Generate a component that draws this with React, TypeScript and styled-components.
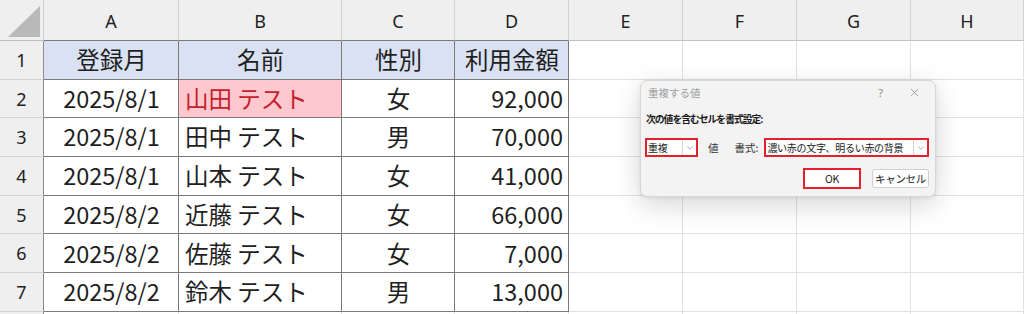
import React from "react";
import styled, { createGlobalStyle } from "styled-components";
import { ChevronDown, X } from "lucide-react";

const GlobalStyle = createGlobalStyle`
  html, body {
    margin: 0;
    padding: 0;
    background: #ffffff;
  }
  body {
    width: 1024px;
    height: 314px;
    overflow: hidden;
    font-family: "Noto Sans CJK JP", "Noto Sans", sans-serif;
  }
`;

const COLS = ["A", "B", "C", "D", "E", "F", "G", "H"];

type Row = {
  date: string;
  name: string;
  sex: string;
  amount: string;
  dup?: boolean;
};

const rows: Row[] = [
  { date: "2025/8/1", name: "山田 テスト", sex: "女", amount: "92,000", dup: true },
  { date: "2025/8/1", name: "田中 テスト", sex: "男", amount: "70,000" },
  { date: "2025/8/1", name: "山本 テスト", sex: "女", amount: "41,000" },
  { date: "2025/8/2", name: "近藤 テスト", sex: "女", amount: "66,000" },
  { date: "2025/8/2", name: "佐藤 テスト", sex: "女", amount: "7,000" },
  { date: "2025/8/2", name: "鈴木 テスト", sex: "男", amount: "13,000" },
];

const App: React.FC = () => {
  return (
    <>
      <GlobalStyle />
      <Screen>
        <Sheet>
          <Corner>
            <CornerMark />
          </Corner>
          {COLS.map((c, i) => (
            <ColHead key={c} $table={i < 4}>
              {c}
            </ColHead>
          ))}

          <RowHead>1</RowHead>
          <Cell $table $align="center" $fill="#d9e1f2">登録月</Cell>
          <Cell $table $align="center" $fill="#d9e1f2">名前</Cell>
          <Cell $table $align="center" $fill="#d9e1f2">性別</Cell>
          <Cell $table $align="center" $fill="#d9e1f2">利用金額</Cell>
          <Cell />
          <Cell />
          <Cell />
          <Cell />

          {rows.map((r, i) => (
            <React.Fragment key={i}>
              <RowHead>{i + 2}</RowHead>
              <Cell $table $align="center">{r.date}</Cell>
              <Cell
                $table
                $align="left"
                $fill={r.dup ? "#ffc7ce" : undefined}
                $color={r.dup ? "#c41f2c" : undefined}
              >
                {r.name}
              </Cell>
              <Cell $table $align="center">{r.sex}</Cell>
              <Cell $table $align="right">{r.amount}</Cell>
              <Cell />
              <Cell />
              <Cell />
              <Cell />
            </React.Fragment>
          ))}

          {/* row 8 only peeks in below the table edge */}
          <RowHead />
          {COLS.map((c) => (
            <Cell key={c} />
          ))}
        </Sheet>

        <Dialog>
          <TitleBar>
            <Title>重複する値</Title>
            <TitleTools>
              <Help>?</Help>
              <X size={13} strokeWidth={1.2} color="#7a7a7a" />
            </TitleTools>
          </TitleBar>
          <Body>
            <Prompt>次の値を含むセルを書式設定:</Prompt>
            <ControlRow>
              <Select $width={53}>
                <SelectText>重複</SelectText>
                <SelectArrow>
                  <ChevronDown size={10} strokeWidth={1.3} color="#6a6a6a" />
                </SelectArrow>
              </Select>
              <Caption $gap={10}>値</Caption>
              <Caption $gap={16}>書式:</Caption>
              <Select $width={165} $gap={6}>
                <SelectText>濃い赤の文字、明るい赤の背景</SelectText>
                <SelectArrow>
                  <ChevronDown size={10} strokeWidth={1.3} color="#6a6a6a" />
                </SelectArrow>
              </Select>
            </ControlRow>
            <ButtonRow>
              <Button $primary>OK</Button>
              <Button>キャンセル</Button>
            </ButtonRow>
          </Body>
        </Dialog>
      </Screen>
    </>
  );
};

const Screen = styled.div`
  position: relative;
  width: 1024px;
  height: 314px;
  overflow: hidden;
`;

const Sheet = styled.div`
  display: grid;
  grid-template-columns: 44px 135px 163px 113px 114px 114px 114px 114px 113px;
  grid-template-rows: 41px repeat(7, 38.7px) 30px;
`;

const Corner = styled.div`
  position: relative;
  background: #efefef;
  border-right: 1px solid #cfcfcf;
  border-bottom: 1px solid #bdbdbd;
  box-sizing: border-box;
`;

const CornerMark = styled.div`
  position: absolute;
  right: 3px;
  bottom: 3px;
  width: 32px;
  height: 31px;
  background: #b9b9b9;
  clip-path: polygon(100% 0, 100% 100%, 0 100%);
`;

const ColHead = styled.div<{ $table?: boolean }>`
  display: flex;
  align-items: center;
  justify-content: center;
  background: #efefef;
  border-right: 1px solid #d2d2d2;
  border-bottom: 1px solid ${(p) => (p.$table ? "#7a7a7a" : "#c2c2c2")};
  box-sizing: border-box;
  padding-top: 2px;
  font-family: "Noto Sans", "Open Sans", sans-serif;
  font-size: 18px;
  color: #222222;
`;

const RowHead = styled.div`
  display: flex;
  align-items: center;
  justify-content: center;
  background: #efefef;
  border-right: 1px solid #8c8c8c;
  border-bottom: 1px solid #d4d4d4;
  box-sizing: border-box;
  font-family: "Noto Sans", "Open Sans", sans-serif;
  font-size: 18px;
  color: #222222;
`;

const Cell = styled.div<{
  $table?: boolean;
  $align?: "left" | "center" | "right";
  $fill?: string;
  $color?: string;
}>`
  display: flex;
  align-items: center;
  justify-content: ${(p) =>
    p.$align === "left" ? "flex-start" : p.$align === "right" ? "flex-end" : "center"};
  padding: 0 5px 0 6px;
  box-sizing: border-box;
  background: ${(p) => p.$fill || "#ffffff"};
  color: ${(p) => p.$color || "#1f1f1f"};
  border-right: 1px solid ${(p) => (p.$table ? "#7a7a7a" : "#e1e1e1")};
  border-bottom: 1px solid ${(p) => (p.$table ? "#7a7a7a" : "#e1e1e1")};
  font-family: "Noto Sans CJK JP", sans-serif;
  font-size: 23.5px;
  line-height: 1;
  white-space: nowrap;
  overflow: hidden;
`;

const Dialog = styled.div`
  position: absolute;
  left: 640px;
  top: 80px;
  width: 296px;
  height: 117px;
  box-sizing: border-box;
  background: #f3f3f3;
  border: 1px solid #d6d6d6;
  border-radius: 7px;
  box-shadow: 0 8px 28px rgba(0, 0, 0, 0.16), 0 1px 4px rgba(0, 0, 0, 0.08);
  display: flex;
  flex-direction: column;
  font-family: "Noto Sans CJK JP", sans-serif;
`;

const TitleBar = styled.div`
  height: 23px;
  display: flex;
  align-items: center;
  justify-content: space-between;
  padding: 0 14px 0 7px;
`;

const Title = styled.span`
  font-size: 10.5px;
  color: #9d9d9d;
`;

const TitleTools = styled.div`
  display: flex;
  align-items: center;
  gap: 25px;
`;

const Help = styled.span`
  font-family: "Noto Sans", sans-serif;
  font-size: 11px;
  color: #8a8a8a;
`;

const Body = styled.div`
  display: flex;
  flex-direction: column;
  padding: 0 3px 0 4px;
`;

const Prompt = styled.div`
  margin-top: 5px;
  height: 20px;
  line-height: 20px;
  padding-left: 1px;
  font-size: 9.8px;
  font-weight: 700;
  color: #1a1a1a;
  letter-spacing: -1px;
`;

const ControlRow = styled.div`
  margin-top: 9px;
  height: 19px;
  display: flex;
  align-items: center;
`;

const Select = styled.div<{ $width: number; $gap?: number }>`
  width: ${(p) => p.$width}px;
  height: 19px;
  margin-left: ${(p) => p.$gap || 0}px;
  box-sizing: border-box;
  border: 2px solid #e3202e;
  background: #ffffff;
  display: flex;
  align-items: stretch;
`;

const SelectText = styled.span`
  flex: 1;
  display: flex;
  align-items: center;
  padding-left: 1px;
  font-size: 10px;
  color: #1a1a1a;
  white-space: nowrap;
  overflow: hidden;
  letter-spacing: -0.3px;
`;

const SelectArrow = styled.span`
  width: 13px;
  display: flex;
  align-items: center;
  justify-content: center;
  border-left: 1px solid #d4d4d4;
`;

const Caption = styled.span<{ $gap: number }>`
  margin-left: ${(p) => p.$gap}px;
  font-size: 10.5px;
  color: #333333;
`;

const ButtonRow = styled.div`
  margin-top: 11px;
  display: flex;
  justify-content: flex-end;
  align-items: center;
  gap: 11px;
  padding-right: 3px;
`;

const Button = styled.button<{ $primary?: boolean }>`
  width: ${(p) => (p.$primary ? 58 : 57)}px;
  height: ${(p) => (p.$primary ? 21 : 19)}px;
  box-sizing: border-box;
  padding: 0;
  background: #ffffff;
  border: ${(p) => (p.$primary ? "2px solid #e3202e" : "1px solid #cfcfcf")};
  border-radius: ${(p) => (p.$primary ? 0 : 3)}px;
  font-family: "Noto Sans CJK JP", sans-serif;
  font-size: 10.5px;
  color: #1a1a1a;
  letter-spacing: -0.3px;
`;

export default App;
